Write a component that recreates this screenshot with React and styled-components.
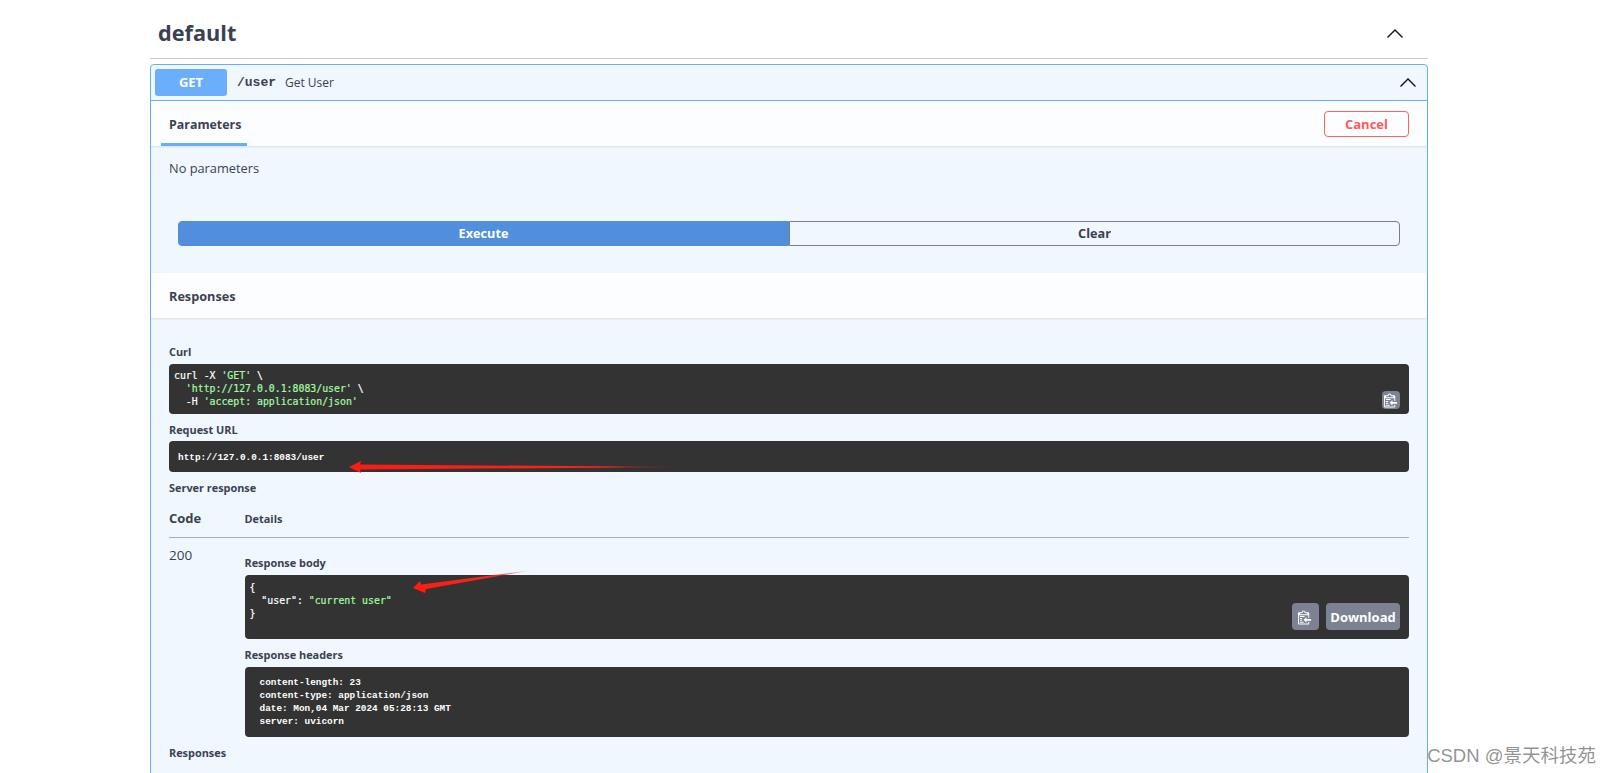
import React from 'react'
import styled, { createGlobalStyle } from 'styled-components'

const GlobalStyle = createGlobalStyle`
  html, body {
    margin: 0;
    padding: 0;
    background: #fff;
    overflow: hidden;
  }
  * {
    box-sizing: border-box;
  }
`

const Page = styled.div`
  position: relative;
  width: 1612px;
  height: 773px;
  overflow: hidden;
  font-family: "Open Sans", "Noto Sans", sans-serif;
  color: #3b4151;
`
const Section = styled.div`
  width: 1278px;
  margin-left: 150px;
`
const SectionHead = styled.div`
  display: flex;
  align-items: center;
  justify-content: space-between;
  height: 59px;
  padding: 8px 25px 0 8px;
  border-bottom: 1px solid #c9ccd3;
  margin-bottom: 5px;
`
const SectionTitle = styled.h3`
  margin: 0;
  font-size: 21.7px;
  font-weight: 700;
  line-height: 28px;
`
const Chevron = styled.svg`
  display: block;
  width: 16px;
  height: 9px;
  fill: none;
  stroke: #111;
  stroke-width: 1.4;
`
const Opblock = styled.div`
  border: 1px solid #61affe;
  border-radius: 4px;
  background: #f0f7ff;
`
const Summary = styled.div`
  display: flex;
  align-items: center;
  height: 36px;
  padding: 4px 11px 4px 4px;
  border-bottom: 1px solid #61affe;
`
const Method = styled.span`
  width: 72px;
  height: 27px;
  border-radius: 3px;
  background: #6aaefc;
  color: #fff;
  font-size: 13px;
  font-weight: 700;
  line-height: 27px;
  text-align: center;
`
const Path = styled.span`
  margin-left: 10px;
  font-family: "Liberation Mono", monospace;
  font-size: 13px;
  font-weight: 700;
  color: #3b4151;
`
const Description = styled.span`
  flex: 1;
  margin-left: 9px;
  font-size: 12px;
`
const TabHeader = styled.div`
  display: flex;
  align-items: center;
  justify-content: space-between;
  height: 45px;
  padding: 0 18px 0 10px;
  background: #fbfdff;
  box-shadow: 0 1px 2px rgba(0, 0, 0, 0.1);
  position: relative;
`
const Tab = styled.div`
  width: 86px;
  height: 44px;
  padding-left: 8px;
  border-bottom: 3px solid #61affe;
  font-size: 12.4px;
  font-weight: 700;
  line-height: 45px;
`
const CancelButton = styled.button`
  width: 85px;
  height: 26px;
  padding: 0;
  border: 1.5px solid #ff6060;
  border-radius: 4px;
  background: transparent;
  color: #ff5a5a;
  font-family: inherit;
  font-size: 13px;
  font-weight: 700;
`
const ParamsBody = styled.div`
  padding: 12px 18px 0;
`
const NoParams = styled.div`
  font-size: 12.8px;
  line-height: 20px;
`
const ExecuteRow = styled.div`
  display: flex;
  margin: 43px 9px 27px;
`
const ActionButton = styled.button`
  flex: 1;
  height: 25px;
  padding: 0 0 2px;
  font-family: inherit;
  font-size: 12.7px;
  font-weight: 700;
  border: 1px solid ${props => props.$primary ? '#518fdd' : '#7d7d7d'};
  border-radius: ${props => props.$primary ? '4px 0 0 4px' : '0 4px 4px 0'};
  background: ${props => props.$primary ? '#518fdd' : 'transparent'};
  color: ${props => props.$primary ? '#fff' : '#3b4151'};
`
const ResponsesHead = styled.div`
  height: 45px;
  padding-left: 18px;
  background: #fbfdff;
  box-shadow: 0 1px 2px rgba(0, 0, 0, 0.1);
  font-size: 12.7px;
  font-weight: 700;
  line-height: 47px;
  position: relative;
`
const ResponsesBody = styled.div`
  padding: 0 18px 40px;
`
const Label = styled.div`
  margin-top: ${props => props.$top}px;
  margin-bottom: ${props => props.$bottom ?? 4}px;
  font-size: 10.9px;
  font-weight: 700;
  line-height: 16px;
`
const CodeBox = styled.div`
  position: relative;
  height: ${props => props.$height}px;
  padding: ${props => props.$padding};
  border-radius: 4px;
  background: #333;
  color: #fff;
  font-family: ${props => props.$serif ? '"Liberation Mono", monospace' : '"DejaVu Sans Mono", monospace'};
  font-size: ${props => props.$serif ? '9.4px' : '9.85px'};
  font-weight: ${props => props.$serif ? 700 : 400};
  -webkit-text-stroke: ${props => props.$serif ? '0' : '0.2px'};
  line-height: 13px;
  white-space: pre;
`
const CodeLine = styled.div`
  height: 13px;
`
const Green = styled.span`
  color: #a2fca2;
`
const TableHead = styled.div`
  display: grid;
  grid-template-columns: 75.5px 1fr;
  align-items: center;
  height: 32px;
  margin-top: 10px;
  padding-bottom: 7px;
  border-bottom: 1px solid #a9adb8;
`
const CodeHead = styled.div`
  font-size: 13px;
  font-weight: 700;
`
const DetailsHead = styled.div`
  font-size: 10.9px;
  font-weight: 700;
`
const ResponseRow = styled.div`
  display: grid;
  grid-template-columns: 75.5px 1fr;
`
const StatusCode = styled.div`
  margin-top: 7px;
  font-size: 13.5px;
  line-height: 20px;
`
const ToolButton = styled.button`
  position: absolute;
  right: ${props => props.$right}px;
  bottom: ${props => props.$bottom}px;
  display: flex;
  align-items: center;
  justify-content: center;
  width: ${props => props.$width}px;
  height: ${props => props.$height}px;
  padding: 0;
  border: none;
  border-radius: 4px;
  background: #7d8293;
  color: #fff;
  -webkit-text-stroke: 0;
  font-family: "Open Sans", sans-serif;
  font-size: 13px;
  font-weight: 700;
`
const CopyIcon = styled.svg`
  display: block;
  width: 15px;
  height: 16px;
  fill: #fff;
`
const Arrow = styled.svg`
  position: absolute;
  left: ${props => props.$left}px;
  top: ${props => props.$top}px;
  pointer-events: none;
`
const Watermark = styled.div`
  position: absolute;
  right: 16px;
  bottom: 5px;
  font-family: "Liberation Sans", "Noto Sans CJK SC", sans-serif;
  font-size: 18.5px;
  line-height: 24px;
  color: rgba(110, 110, 110, 0.75);
  white-space: nowrap;
`

const Up = () => (
  <Chevron viewBox="0 0 16 9">
    <polyline points="0.5,8.5 8,1 15.5,8.5" />
  </Chevron>
)

const Copy = () => (
  <CopyIcon viewBox="0 0 16 16">
    <path d="M2 13h4v1H2v-1zm5-6H2v1h5V7zm2 3V8l-3 3 3 3v-2h5v-2H9zM4.5 9H2v1h2.5V9zM2 12h2.5v-1H2v1zm9 1h1v2c-.02.28-.11.52-.3.7-.19.18-.42.28-.7.3H1c-.55 0-1-.45-1-1V4c0-.55.45-1 1-1h3c0-1.11.89-2 2-2 1.11 0 2 .89 2 2h3c.55 0 1 .45 1 1v5h-1V6H1v9h10v-2zM2 5h8c0-.55-.45-1-1-1H8c-.55 0-1-.45-1-1s-.45-1-1-1-1 .45-1 1-.45 1-1 1H3c-.55 0-1 .45-1 1z" />
  </CopyIcon>
)

const App = () => {
  return (
    <Page>
      <GlobalStyle />
      <Section>
        <SectionHead>
          <SectionTitle>default</SectionTitle>
          <Up />
        </SectionHead>
        <Opblock>
          <Summary>
            <Method>GET</Method>
            <Path>/user</Path>
            <Description>Get User</Description>
            <Up />
          </Summary>
          <TabHeader>
            <Tab>Parameters</Tab>
            <CancelButton>Cancel</CancelButton>
          </TabHeader>
          <ParamsBody>
            <NoParams>No parameters</NoParams>
            <ExecuteRow>
              <ActionButton $primary>Execute</ActionButton>
              <ActionButton>Clear</ActionButton>
            </ExecuteRow>
          </ParamsBody>
          <ResponsesHead>Responses</ResponsesHead>
          <ResponsesBody>
            <Label $top={26}>Curl</Label>
            <CodeBox $height={50} $padding="5px 5px">
              <CodeLine>curl -X <Green>'GET'</Green> \</CodeLine>
              <CodeLine>{'  '}<Green>'http://127.0.0.1:8083/user'</Green> \</CodeLine>
              <CodeLine>{'  '}-H <Green>'accept: application/json'</Green></CodeLine>
              <ToolButton $right={9} $bottom={5} $width={18} $height={18}><Copy /></ToolButton>
            </CodeBox>
            <Label $top={8} $bottom={3}>Request URL</Label>
            <CodeBox $height={31} $padding="10px 9px" $serif>
              http://127.0.0.1:8083/user
              <Arrow $left={180} $top={19} width={340} height={14} viewBox="0 0 340 14">
                <defs>
                  <linearGradient id="tailOne" x1="0" x2="1" y1="0" y2="0">
                    <stop offset="0" stopColor="#ff1a10" />
                    <stop offset="0.75" stopColor="#f8251b" />
                    <stop offset="1" stopColor="#ff1a10" stopOpacity="0" />
                  </linearGradient>
                </defs>
                <polygon points="0,7 12,1 11,4.5 340,7 11,9.5 12,13" fill="url(#tailOne)" />
              </Arrow>
            </CodeBox>
            <Label $top={8} $bottom={0}>Server response</Label>
            <TableHead>
              <CodeHead>Code</CodeHead>
              <DetailsHead>Details</DetailsHead>
            </TableHead>
            <ResponseRow>
              <StatusCode>200</StatusCode>
              <div>
                <Label $top={17}>Response body</Label>
                <CodeBox $height={64} $padding="6px 5px">
                  <CodeLine>{'{'}</CodeLine>
                  <CodeLine>{'  "user": '}<Green>"current user"</Green></CodeLine>
                  <CodeLine>{'}'}</CodeLine>
                  <Arrow $left={167} $top={-6} width={122} height={26} viewBox="0 0 122 26">
                    <defs>
                      <linearGradient id="tailTwo" x1="0" x2="1" y1="1" y2="0">
                        <stop offset="0" stopColor="#ff1a10" />
                        <stop offset="0.7" stopColor="#f8251b" />
                        <stop offset="1" stopColor="#ff1a10" stopOpacity="0" />
                      </linearGradient>
                    </defs>
                    <polygon points="1,19 8,12 9,15.5 121,1 14,20 13,24" fill="url(#tailTwo)" />
                  </Arrow>
                  <ToolButton $right={90} $bottom={9} $width={27} $height={27}><Copy /></ToolButton>
                  <ToolButton $right={9} $bottom={9} $width={74} $height={27}>Download</ToolButton>
                </CodeBox>
                <Label $top={8}>Response headers</Label>
                <CodeBox $height={70} $padding="9px 15px" $serif>
                  <CodeLine>content-length: 23</CodeLine>
                  <CodeLine>content-type: application/json</CodeLine>
                  <CodeLine>date: Mon,04 Mar 2024 05:28:13 GMT</CodeLine>
                  <CodeLine>server: uvicorn</CodeLine>
                </CodeBox>
              </div>
            </ResponseRow>
            <Label $top={8}>Responses</Label>
          </ResponsesBody>
        </Opblock>
      </Section>
      <Watermark>CSDN @景天科技苑</Watermark>
    </Page>
  )
}

export default App
